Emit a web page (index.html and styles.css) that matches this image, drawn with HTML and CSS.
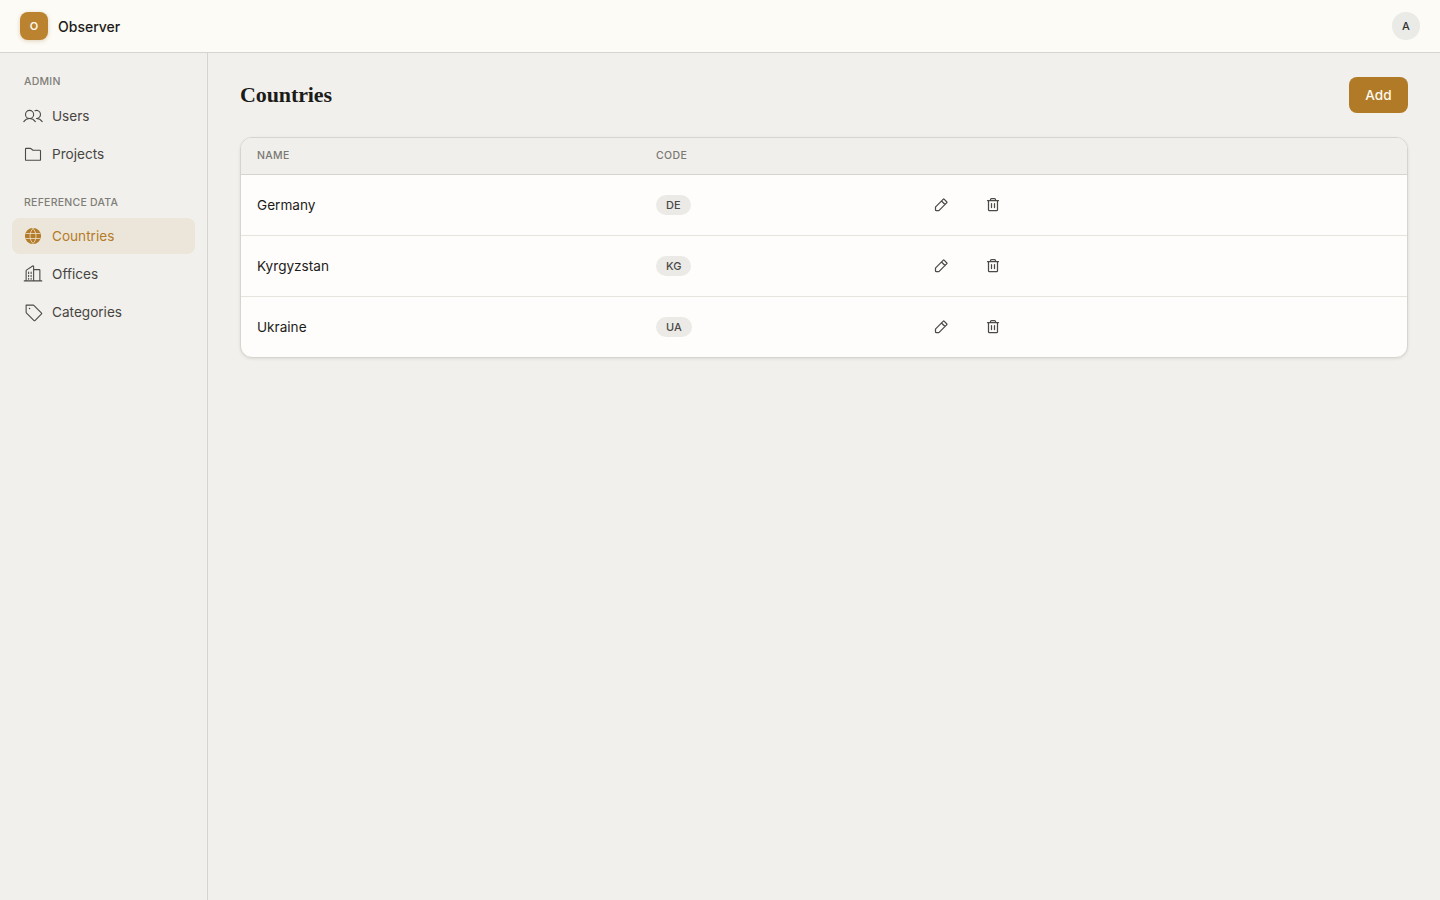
FILE: index.html
```html
<!DOCTYPE html>
<html lang="en">
<head>
<meta charset="utf-8">
<title>Observer</title>
<link rel="stylesheet" href="styles.css">
</head>
<body>
<header class="topbar">
  <div class="brand"><span class="logo">O</span><span class="brand-name">Observer</span></div>
  <span class="avatar">A</span>
</header>
<div class="shell">
  <aside class="sidebar">
    <div class="nav-label">ADMIN</div>
    <a class="nav-item">
      <svg class="nav-icon" viewBox="0 0 256 256"><circle cx="84" cy="108" r="52"/><path d="M10.230 200a88 88 0 0 1 147.540 0M172 160a87.930 87.930 0 0 1 73.770 40M152.690 59.700A52 52 0 1 1 172 160"/></svg>
      Users
    </a>
    <a class="nav-item">
      <svg class="nav-icon" viewBox="0 0 256 256"><path d="M216 208H40a8 8 0 0 1-8-8V64a8 8 0 0 1 8-8h53.330a8 8 0 0 1 4.800 1.600L128 80h88a8 8 0 0 1 8 8v112a8 8 0 0 1-8 8Z"/></svg>
      Projects
    </a>
    <div class="nav-label nav-label-second">REFERENCE DATA</div>
    <a class="nav-item nav-item-active">
      <svg class="nav-icon" viewBox="0 0 256 256"><circle class="globe-fill" cx="128" cy="128" r="96"/><path class="globe-lines" d="M128 32c-24 24-38 58-38 96s14 72 38 96c24-24 38-58 38-96s-14-72-38-96ZM37 96h182M37 160h182"/></svg>
      Countries
    </a>
    <a class="nav-item">
      <svg class="nav-icon" viewBox="0 0 256 256"><path d="M16 216h224M40 216V85.300a8 8 0 0 1 3.600-6.700l80-53.300a8 8 0 0 1 12.400 6.700V216M136 72h72a8 8 0 0 1 8 8v136M72 104v16M104 104v16M72 144v16M104 144v16M72 184v12M104 184v12"/></svg>
      Offices
    </a>
    <a class="nav-item">
      <svg class="nav-icon" viewBox="0 0 256 256"><path d="M42.340 138.340A8 8 0 0 1 40 132.690V40h92.690a8 8 0 0 1 5.650 2.340l99.320 99.320a8 8 0 0 1 0 11.310L153 237.660a8 8 0 0 1-11.310 0Z"/><circle class="tag-dot" cx="84" cy="84" r="10"/></svg>
      Categories
    </a>
  </aside>
  <main class="main">
    <div class="page-head">
      <h1 class="page-title">Countries</h1>
      <button class="add-btn">Add</button>
    </div>
    <div class="table-card">
      <table class="data-table">
        <colgroup><col class="col-name"><col class="col-code"><col class="col-actions"></colgroup>
        <thead><tr><th>NAME</th><th>CODE</th><th></th></tr></thead>
        <tbody>
          <tr>
            <td>Germany</td><td><span class="code-pill">DE</span></td>
            <td><div class="actions">
              <button class="icon-btn"><svg class="row-icon" viewBox="0 0 256 256"><path d="M92.690 216H48a8 8 0 0 1-8-8v-44.690a8 8 0 0 1 2.340-5.650L165.660 34.340a8 8 0 0 1 11.310 0L221.660 79a8 8 0 0 1 0 11.310L98.340 213.660a8 8 0 0 1-5.650 2.340ZM136 64l56 56"/></svg></button>
              <button class="icon-btn"><svg class="row-icon" viewBox="0 0 256 256"><path d="M216 56H40M104 104v64M152 104v64M200 56v152a8 8 0 0 1-8 8H64a8 8 0 0 1-8-8V56M168 56V40a16 16 0 0 0-16-16h-48a16 16 0 0 0-16 16v16"/></svg></button>
            </div></td>
          </tr>
          <tr>
            <td>Kyrgyzstan</td><td><span class="code-pill">KG</span></td>
            <td><div class="actions">
              <button class="icon-btn"><svg class="row-icon" viewBox="0 0 256 256"><path d="M92.690 216H48a8 8 0 0 1-8-8v-44.690a8 8 0 0 1 2.340-5.650L165.660 34.340a8 8 0 0 1 11.310 0L221.660 79a8 8 0 0 1 0 11.310L98.340 213.660a8 8 0 0 1-5.650 2.340ZM136 64l56 56"/></svg></button>
              <button class="icon-btn"><svg class="row-icon" viewBox="0 0 256 256"><path d="M216 56H40M104 104v64M152 104v64M200 56v152a8 8 0 0 1-8 8H64a8 8 0 0 1-8-8V56M168 56V40a16 16 0 0 0-16-16h-48a16 16 0 0 0-16 16v16"/></svg></button>
            </div></td>
          </tr>
          <tr>
            <td>Ukraine</td><td><span class="code-pill">UA</span></td>
            <td><div class="actions">
              <button class="icon-btn"><svg class="row-icon" viewBox="0 0 256 256"><path d="M92.690 216H48a8 8 0 0 1-8-8v-44.690a8 8 0 0 1 2.340-5.650L165.660 34.340a8 8 0 0 1 11.310 0L221.660 79a8 8 0 0 1 0 11.310L98.340 213.660a8 8 0 0 1-5.650 2.340ZM136 64l56 56"/></svg></button>
              <button class="icon-btn"><svg class="row-icon" viewBox="0 0 256 256"><path d="M216 56H40M104 104v64M152 104v64M200 56v152a8 8 0 0 1-8 8H64a8 8 0 0 1-8-8V56M168 56V40a16 16 0 0 0-16-16h-48a16 16 0 0 0-16 16v16"/></svg></button>
            </div></td>
          </tr>
        </tbody>
      </table>
    </div>
  </main>
</div>
</body>
</html>
```
FILE: styles.css
```css
* { box-sizing: border-box; }
html, body { margin: 0; height: 100%; }
body {
  background: #f1f0ec;
  color: #1c1b19;
  font-family: "Inter", "Noto Sans", sans-serif;
  font-size: 14px;
  overflow: hidden;
}
.topbar {
  height: 53px;
  background: #fcfbf6;
  border-bottom: 1px solid #d6d4cf;
  display: flex;
  align-items: center;
  justify-content: space-between;
  padding: 0 20px;
}
.brand { display: flex; align-items: center; gap: 10px; }
.logo {
  width: 28px;
  height: 28px;
  border-radius: 8px;
  background: #bb822f;
  box-shadow: 0 1px 4px rgba(150, 100, 30, 0.28);
  color: #fdf8ee;
  display: flex;
  align-items: center;
  justify-content: center;
  font-size: 11px;
  font-weight: 600;
}
.brand-name { font-size: 14px; font-weight: 500; letter-spacing: 0; }
.avatar {
  width: 28px;
  height: 28px;
  border-radius: 50%;
  background: #eaeae6;
  color: #333230;
  display: flex;
  align-items: center;
  justify-content: center;
  font-size: 11px;
  font-weight: 500;
}
.shell { display: flex; height: 847px; }
.sidebar {
  width: 208px;
  flex: none;
  border-right: 1px solid #d6d4cf;
  padding: 20px 12px;
  display: flex;
  flex-direction: column;
}
.nav-label {
  height: 16px;
  line-height: 18px;
  padding-left: 12px;
  font-size: 10.5px;
  font-weight: 500;
  letter-spacing: 0.25px;
  color: #7f7d77;
  margin-bottom: 9px;
}
.nav-label-second { margin-top: 20px; margin-bottom: 8px; }
.nav-item {
  height: 36px;
  margin-bottom: 2px;
  padding-left: 11px;
  border-radius: 8px;
  display: flex;
  align-items: center;
  gap: 9px;
  font-size: 13.6px;
  color: #474542;
}
.nav-item-active { background: #ece5d9; color: #b47b28; }
.nav-icon {
  width: 20px;
  height: 20px;
  flex: none;
  fill: none;
  stroke: #4c4a47;
  stroke-width: 14;
  stroke-linecap: round;
  stroke-linejoin: round;
}
.nav-item-active .nav-icon { stroke: #b47b28; }
.globe-fill { fill: #b47b28; }
.nav-item-active .globe-lines { stroke: #ece5d9; stroke-width: 10; }
.tag-dot { fill: #4c4a47; stroke: none; }
.main { flex: 1; padding: 24px 32px; min-width: 0; }
.page-head {
  display: flex;
  align-items: center;
  justify-content: space-between;
  height: 36px;
  margin-bottom: 24px;
}
.page-title {
  margin: 0;
  font-family: "Liberation Serif", serif;
  font-size: 22px;
  font-weight: 700;
  letter-spacing: -0.1px;
  color: #1c1b19;
}
.add-btn {
  width: 59px;
  height: 36px;
  border: 0;
  border-radius: 8px;
  background: #b17a27;
  color: #fdf8ee;
  font: 500 13.6px "Inter", sans-serif;
  padding: 0;
}
.table-card {
  background: #fefdfb;
  border: 1px solid #d6d4cf;
  border-radius: 12px;
  overflow: hidden;
  box-shadow: 0 1px 3px rgba(60, 50, 30, 0.1);
}
.data-table {
  width: 100%;
  border-collapse: collapse;
  table-layout: fixed;
}
.col-name { width: 399px; }
.col-code { width: 269px; }
.data-table th {
  height: 36px;
  background: #f0efeb;
  border-bottom: 1px solid #d6d4cf;
  padding: 0 16px;
  text-align: left;
  font-size: 10.5px;
  font-weight: 500;
  letter-spacing: 0.35px;
  color: #7a7873;
}
.data-table td {
  height: 61px;
  padding: 0 16px;
  border-bottom: 1px solid #e6e4df;
  font-size: 13.6px;
  color: #1c1b19;
}
.data-table tr:last-child td { border-bottom: 0; }
.code-pill {
  display: inline-flex;
  align-items: center;
  height: 20px;
  padding: 0 10px;
  border-radius: 10px;
  background: #ebeae6;
  color: #4a4946;
  font-size: 11px;
  font-weight: 500;
}
.actions { display: flex; gap: 20px; }
.icon-btn {
  width: 32px;
  height: 32px;
  border: 0;
  padding: 0;
  background: none;
  display: flex;
  align-items: center;
  justify-content: center;
}
.row-icon {
  width: 16px;
  height: 16px;
  fill: none;
  stroke: #4c4a47;
  stroke-width: 20;
  stroke-linecap: round;
  stroke-linejoin: round;
}
```
